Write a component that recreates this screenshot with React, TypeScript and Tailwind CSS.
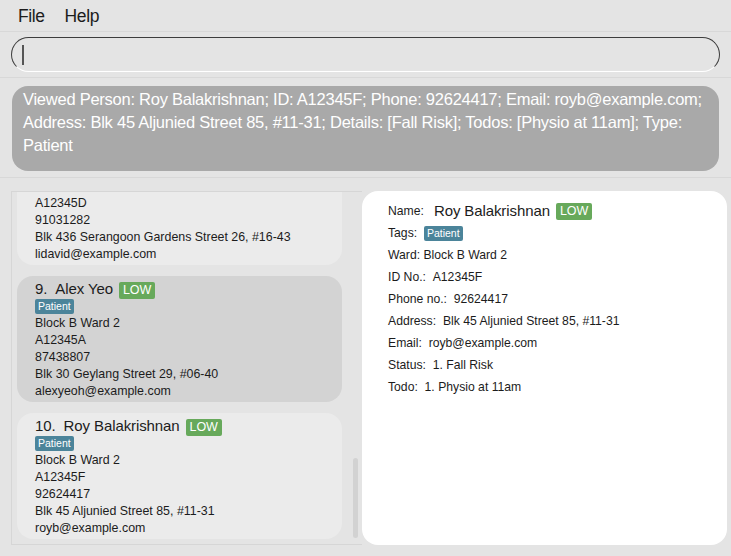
import { useLayoutEffect, useRef } from "react";

type Person = {
  index: number;
  name: string;
  risk: string;
  tag: string;
  ward: string;
  id: string;
  phone: string;
  address: string;
  email: string;
};

const people: Person[] = [
  {
    index: 8,
    name: "David Li",
    risk: "LOW",
    tag: "Patient",
    ward: "Block B Ward 2",
    id: "A12345D",
    phone: "91031282",
    address: "Blk 436 Serangoon Gardens Street 26, #16-43",
    email: "lidavid@example.com",
  },
  {
    index: 9,
    name: "Alex Yeo",
    risk: "LOW",
    tag: "Patient",
    ward: "Block B Ward 2",
    id: "A12345A",
    phone: "87438807",
    address: "Blk 30 Geylang Street 29, #06-40",
    email: "alexyeoh@example.com",
  },
  {
    index: 10,
    name: "Roy Balakrishnan",
    risk: "LOW",
    tag: "Patient",
    ward: "Block B Ward 2",
    id: "A12345F",
    phone: "92624417",
    address: "Blk 45 Aljunied Street 85, #11-31",
    email: "royb@example.com",
  },
];

const selectedIndex = 9;

function RiskBadge({ label }: { label: string }) {
  return (
    <span className="inline-flex h-[17px] items-center rounded-[2px] bg-[#67a95b] px-[4px] text-[12.5px] leading-none text-white">
      {label}
    </span>
  );
}

function TagChip({ label }: { label: string }) {
  return (
    <span className="inline-flex h-[15px] items-center rounded-[2px] bg-[#4b849a] px-[3px] text-[10.5px] leading-none text-white">
      {label}
    </span>
  );
}

function PersonCard({ person }: { person: Person }) {
  const selected = person.index === selectedIndex;
  return (
    <div
      className={
        "shrink-0 rounded-[16px] pb-[2px] pl-[18px] pt-[3px] " + (selected ? "bg-[#d3d3d3]" : "bg-[#ebebeb]")
      }
    >
      <div className="flex h-[20px] items-center text-[15px] tracking-[-0.1px]">
        <span className="mr-[8px]">{person.index}.</span>
        <span>{person.name}</span>
        <span className="ml-[6px]">
          <RiskBadge label={person.risk} />
        </span>
      </div>
      <div className="mb-[1px] flex h-[15px]">
        <TagChip label={person.tag} />
      </div>
      <div className="text-[12.4px] leading-[17px]">
        <div>{person.ward}</div>
        <div>{person.id}</div>
        <div>{person.phone}</div>
        <div>{person.address}</div>
        <div>{person.email}</div>
      </div>
    </div>
  );
}

function DetailRow({ label, children }: { label: string; children: React.ReactNode }) {
  return (
    <div className="flex h-[22px] items-center whitespace-pre text-[12.2px]">
      <span>{label}</span>
      {children}
    </div>
  );
}

export default function App() {
  const listRef = useRef<HTMLDivElement>(null);
  const viewed = people[2];

  useLayoutEffect(() => {
    if (listRef.current) listRef.current.scrollTop = listRef.current.scrollHeight;
  }, []);

  return (
    <div className="flex h-[556px] w-[731px] flex-col overflow-hidden bg-[#e4e4e4] font-['Liberation_Sans',Arial,sans-serif] text-[#1c1c1c]">
      {/* menu bar */}
      <div className="flex h-[32px] shrink-0 items-center gap-[20px] border-b border-[#d8d8d8] pl-[18px] pt-[1px] text-[17.5px] tracking-[-0.4px]">
        <span>File</span>
        <span>Help</span>
      </div>

      {/* command box */}
      <div className="shrink-0 border-b border-[#d8d8d8] px-[11px] py-[5px]">
        <div className="flex h-[35px] items-center rounded-full border border-[#3d3d3d] border-b-white bg-[#e4e4e4] pl-[10px]">
          <span className="h-[20px] w-[1.5px] bg-[#555]" />
        </div>
      </div>

      {/* result display */}
      <div className="shrink-0 border-b border-[#d8d8d8] px-[12px] pb-[6px] pt-[8px]">
        <div className="h-[85px] rounded-[16px] bg-[#a9a9a9] px-[11px] pt-[2px] text-[16.5px] leading-[23px] tracking-[-0.25px] text-white">
          Viewed Person: Roy Balakrishnan; ID: A12345F; Phone: 92624417; Email: royb@example.com; Address: Blk 45
          Aljunied Street 85, #11-31; Details: [Fall Risk]; Todos: [Physio at 11am]; Type: Patient
        </div>
      </div>

      {/* lower area */}
      <div className="flex min-h-0 flex-1 pb-[11px] pl-[11px] pt-[13px]">
        <div className="relative w-[351px] shrink-0 border-b border-l border-t border-[#d6d6d6]">
          <div ref={listRef} className="flex h-full flex-col gap-[11px] overflow-hidden pb-[5px] pl-[5px] pr-[20px] pt-[6px]">
            {people.map((p) => (
              <PersonCard key={p.index} person={p} />
            ))}
          </div>
          <div className="absolute bottom-[6px] right-[4px] h-[80px] w-[5px] rounded-full bg-[#d2d2d2]" />
        </div>

        <div className="w-[365px] shrink-0 rounded-[16px] bg-white pl-[26px] pt-[9px]">
          <div className="flex h-[22px] items-center text-[12.2px]">
            <span>Name:</span>
            <span className="ml-[10px] text-[15px] tracking-[-0.1px]">{viewed.name}</span>
            <span className="ml-[6px]">
              <RiskBadge label={viewed.risk} />
            </span>
          </div>
          <DetailRow label="Tags:  ">
            <TagChip label={viewed.tag} />
          </DetailRow>
          <DetailRow label="Ward: ">
            <span>{viewed.ward}</span>
          </DetailRow>
          <DetailRow label="ID No.:  ">
            <span>{viewed.id}</span>
          </DetailRow>
          <DetailRow label="Phone no.:  ">
            <span>{viewed.phone}</span>
          </DetailRow>
          <DetailRow label="Address:  ">
            <span>{viewed.address}</span>
          </DetailRow>
          <DetailRow label="Email:  ">
            <span>{viewed.email}</span>
          </DetailRow>
          <DetailRow label="Status:  ">
            <span>1. Fall Risk</span>
          </DetailRow>
          <DetailRow label="Todo:  ">
            <span>1. Physio at 11am</span>
          </DetailRow>
        </div>
      </div>
    </div>
  );
}
